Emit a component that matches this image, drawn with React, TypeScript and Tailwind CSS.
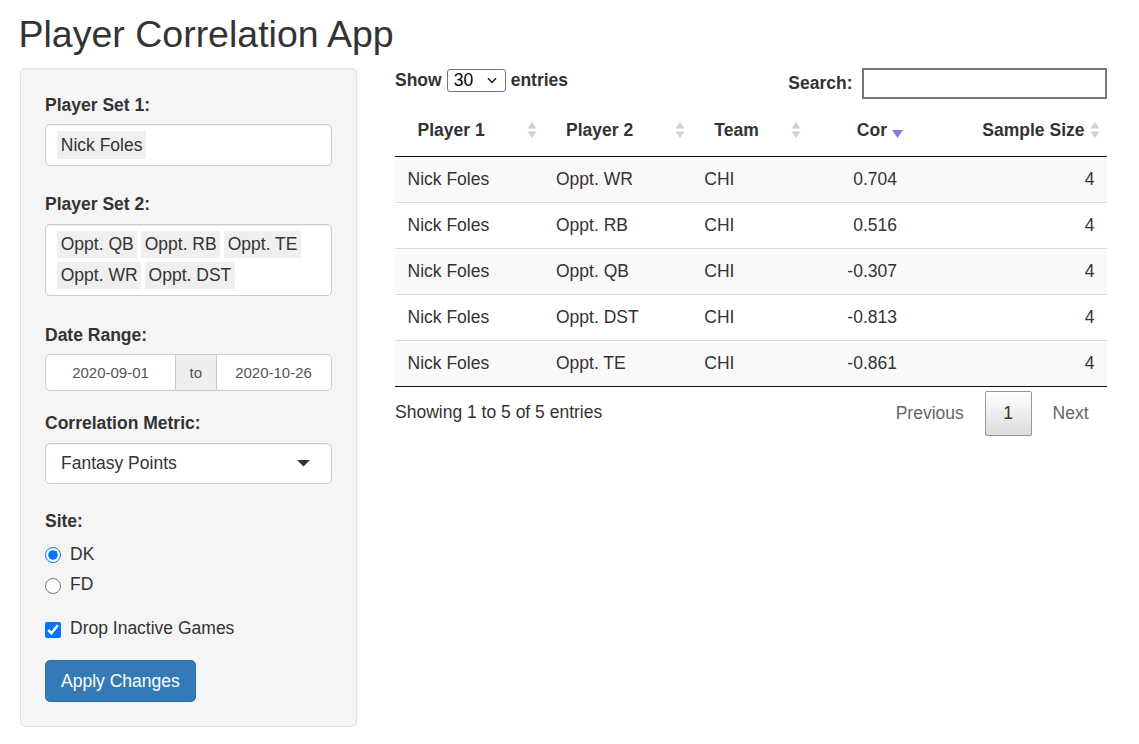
import React from "react";

const rows: string[][] = [
  ["Nick Foles", "Oppt. WR", "CHI", "0.704", "4"],
  ["Nick Foles", "Oppt. RB", "CHI", "0.516", "4"],
  ["Nick Foles", "Oppt. QB", "CHI", "-0.307", "4"],
  ["Nick Foles", "Oppt. DST", "CHI", "-0.813", "4"],
  ["Nick Foles", "Oppt. TE", "CHI", "-0.861", "4"],
];

const gridCols = "grid grid-cols-[148.5px_148.3px_116.7px_101px_197.5px]";

function SortBoth() {
  return (
    <svg className="absolute right-[7px] top-[15px]" width="10" height="18" viewBox="0 0 10 18">
      <polygon points="0.5,7.5 5,1 9.5,7.5" fill="#d0d0d0" />
      <polygon points="0.5,10.5 5,17 9.5,10.5" fill="#d0d0d0" />
    </svg>
  );
}

function SortDesc() {
  return (
    <svg className="absolute right-[6.5px] top-[24.5px]" width="11" height="8" viewBox="0 0 11 8">
      <polygon points="0,0 11,0 5.5,8" fill="#7b7fd9" />
    </svg>
  );
}

function Chip({ children }: { children: React.ReactNode }) {
  return (
    <div className="h-[27.5px] leading-[25px] px-[3.75px] py-[1.25px] mr-[3.5px] mb-[3.75px] bg-[#efefef] text-[#333]">
      {children}
    </div>
  );
}

function Label({ children }: { children: React.ReactNode }) {
  return <div className="font-bold leading-[25px] mb-[6.25px]">{children}</div>;
}

export default function App() {
  return (
    <div className="min-h-[744px] bg-white text-[#333] font-['Liberation_Sans',Arial,sans-serif] text-[17.5px] leading-[25px]">
      <div className="px-[20px]">
        <h2 className="pt-[14px] ml-[-1.5px] text-[37.5px] leading-[41.25px] font-normal text-[#333]">
          Player Correlation App
        </h2>
        <div className="mt-[12.75px] flex items-start gap-[38px]">
          {/* Sidebar */}
          <div className="w-[337px] bg-[#f5f5f5] border border-[#e3e3e3] rounded-[5px] p-[24px] shadow-[inset_0_1px_1px_rgba(0,0,0,0.05)]">
            <Label>Player Set 1:</Label>
            <div className="bg-white border border-[#ccc] rounded-[5px] pt-[6px] pb-[2px] pl-[11px] pr-[11px] flex flex-wrap shadow-[inset_0_1px_1px_rgba(0,0,0,0.075)]">
              <Chip>Nick Foles</Chip>
            </div>

            <div className="mt-[26.75px]">
              <Label>Player Set 2:</Label>
              <div className="bg-white border border-[#ccc] rounded-[5px] pt-[6px] pb-[2px] pl-[11px] pr-[11px] flex flex-wrap shadow-[inset_0_1px_1px_rgba(0,0,0,0.075)]">
                <Chip>Oppt. QB</Chip>
                <Chip>Oppt. RB</Chip>
                <Chip>Oppt. TE</Chip>
                <Chip>Oppt. WR</Chip>
                <Chip>Oppt. DST</Chip>
              </div>
            </div>

            <div className="mt-[26.75px]">
              <Label>Date Range:</Label>
              <div className="flex h-[37px] text-[15px] text-[#555]">
                <div className="w-[131px] bg-white border border-[#ccc] rounded-l-[5px] flex items-center justify-center">
                  2020-09-01
                </div>
                <div className="w-[39.5px] bg-[#eee] border-y border-[#ccc] flex items-center justify-center">
                  to
                </div>
                <div className="w-[116px] bg-white border border-[#ccc] rounded-r-[5px] flex items-center justify-center">
                  2020-10-26
                </div>
              </div>
            </div>

            <div className="mt-[20.25px]">
              <Label>Correlation Metric:</Label>
              <div className="h-[41.75px] bg-white border border-[#ccc] rounded-[5px] pl-[15px] pr-[21px] flex items-center justify-between shadow-[inset_0_1px_1px_rgba(0,0,0,0.075)]">
                <span>Fantasy Points</span>
                <svg width="13" height="7" viewBox="0 0 13 7">
                  <polygon points="0,0 13,0 6.5,6.5" fill="#333" />
                </svg>
              </div>
            </div>

            <div className="mt-[24.75px] font-bold leading-[25px]">Site:</div>
            <label className="mt-[7.5px] flex items-start h-[25px]">
              <input type="radio" name="site" defaultChecked className="mt-[5.5px] w-[16px] h-[16px] accent-[#0075ff]" />
              <span className="ml-[9px]">DK</span>
            </label>
            <label className="mt-[5.2px] flex items-start h-[25px]">
              <input type="radio" name="site" className="mt-[6.5px] w-[16px] h-[16px] accent-[#0075ff]" />
              <span className="ml-[9px]">FD</span>
            </label>
            <label className="mt-[19px] flex items-start h-[25px]">
              <input type="checkbox" defaultChecked className="mt-[6.5px] w-[16px] h-[16px] accent-[#0075ff]" />
              <span className="ml-[9px]">Drop Inactive Games</span>
            </label>

            <button className="mt-[19.3px] h-[42.5px] px-[15px] bg-[#337ab7] border border-[#2e6da4] rounded-[5px] text-white leading-[25px]">
              Apply Changes
            </button>
          </div>

          {/* Main panel */}
          <div className="w-[712px]">
            <div className="flex justify-between items-start">
              <div className="h-[24px] flex items-center font-bold">
                <span>Show</span>
                <div className="mx-[5px] w-[59px] h-[23px] border border-[#767676] rounded-[3px] flex items-center justify-between pl-[6px] pr-[8px] font-normal text-black bg-white">
                  <span>30</span>
                  <svg width="10" height="7" viewBox="0 0 10 7">
                    <polyline points="1,1.2 5,5.5 9,1.2" fill="none" stroke="#222" strokeWidth="1.5" />
                  </svg>
                </div>
                <span>entries</span>
              </div>
              <div className="flex items-center font-bold">
                <span>Search:</span>
                <div className="ml-[9px] w-[245.5px] h-[31px] border-2 border-[#767676] bg-white" />
              </div>
            </div>

            <div className="mt-[6.5px]">
              <div className={`${gridCols} border-b border-[#111] font-bold`}>
                <div className="relative py-[12.5px] pl-[22.5px] pr-[22.5px]">
                  Player 1
                  <SortBoth />
                </div>
                <div className="relative py-[12.5px] pl-[22.5px] pr-[22.5px]">
                  Player 2
                  <SortBoth />
                </div>
                <div className="relative py-[12.5px] pl-[22.5px] pr-[22.5px]">
                  Team
                  <SortBoth />
                </div>
                <div className="relative py-[12.5px] pl-[10px] pr-[22.5px] text-right">
                  Cor
                  <SortDesc />
                </div>
                <div className="relative py-[12.5px] pl-[10px] pr-[22.5px] text-right">
                  Sample Size
                  <SortBoth />
                </div>
              </div>
              {rows.map((r, i) => (
                <div
                  key={i}
                  className={`${gridCols} ${i % 2 === 0 ? "bg-[#f9f9f9]" : "bg-white"} ${
                    i > 0 ? "border-t border-[#ddd]" : ""
                  }`}
                >
                  <div className="py-[10px] px-[12.5px]">{r[0]}</div>
                  <div className="py-[10px] px-[12.5px]">{r[1]}</div>
                  <div className="py-[10px] px-[12.5px]">{r[2]}</div>
                  <div className="py-[10px] px-[12.5px] text-right">{r[3]}</div>
                  <div className="py-[10px] px-[12.5px] text-right">{r[4]}</div>
                </div>
              ))}
              <div className="border-t border-[#111]" />
            </div>

            <div className="flex justify-between items-start">
              <div className="pt-[13px]">Showing 1 to 5 of 5 entries</div>
              <div className="pt-[4.5px] flex">
                <div className="px-[17.5px] py-[8.75px] border border-transparent text-[#666]">Previous</div>
                <div className="ml-[2.5px] px-[17.5px] py-[8.75px] border border-[#979797] rounded-[2px] bg-gradient-to-b from-white to-[#dcdcdc] text-[#333]">
                  1
                </div>
                <div className="ml-[2.5px] px-[17.5px] py-[8.75px] border border-transparent text-[#666]">Next</div>
              </div>
            </div>
          </div>
        </div>
      </div>
    </div>
  );
}
